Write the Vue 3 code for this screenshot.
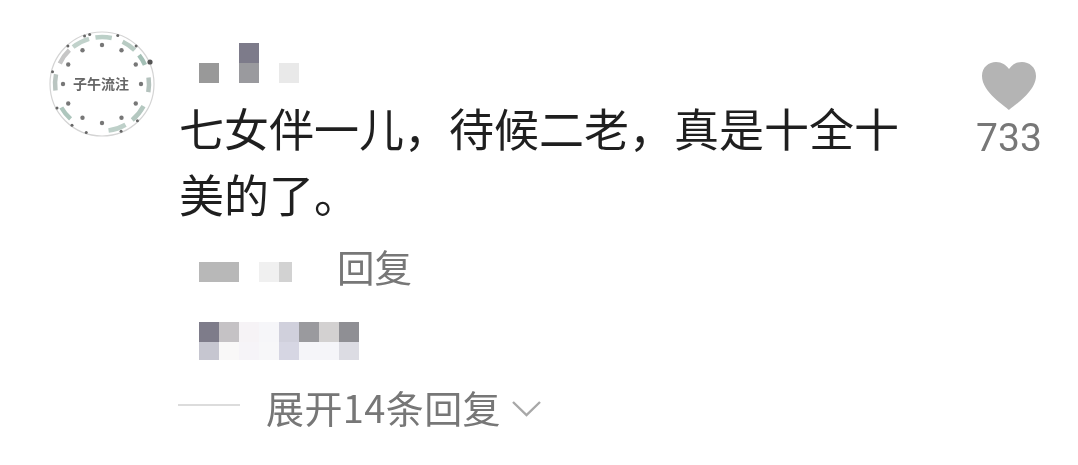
<template>
  <div class="comment">
    <svg class="avatar" width="108" height="108" viewBox="-54 -54 108 108">
      <circle r="52" fill="#fff" stroke="#d4d4d4" stroke-width="1.2" />
      <path
        v-for="(arco, i) in arcos"
        :key="'a' + i"
        :d="arco.d"
        fill="none"
        :stroke="arco.cor"
        stroke-width="4.5"
      />
      <circle v-for="(p, i) in pontosInternos" :key="'i' + i" :cx="p.x" :cy="p.y" r="2.2" fill="#777" />
      <circle v-for="(p, i) in pontosExternos" :key="'e' + i" :cx="p.x" :cy="p.y" r="1.5" fill="#666" />
      <circle cx="48" cy="-22" r="2.6" fill="#555" />
      <text x="-1" y="5" text-anchor="middle" class="avatar-text">子午流注</text>
    </svg>

    <div class="conteudo">
      <div class="nome">
        <span class="bloco medio"></span>
        <span class="bloco alto"></span>
        <span class="bloco claro"></span>
      </div>

      <p class="texto">七女伴一儿，待候二老，真是十全十美的了。</p>

      <div class="meta">
        <span class="data"></span>
        <span class="local"><i></i><i></i></span>
        <span class="responder">回复</span>
      </div>

      <div class="mosaico">
        <span
          v-for="(cor, i) in mosaico"
          :key="i"
          :style="{ background: cor }"
        ></span>
      </div>

      <div class="expandir">
        <span class="linha"></span>
        <span class="expandir-texto">展开14条回复</span>
        <svg class="seta" width="31" height="17" viewBox="0 0 31 17">
          <path d="M2 2 L15.5 15 L29 2" fill="none" stroke="#a8a8a8" stroke-width="2.4" />
        </svg>
      </div>
    </div>

    <div class="curtidas">
      <svg width="56" height="50" viewBox="0 0 56 50">
        <path
          d="M28 49 C24 45 1 31 1 15 C1 6 8 1 15 1 C21 1 25 4 28 8 C31 4 35 1 41 1 C48 1 55 6 55 15 C55 31 32 45 28 49 Z"
          fill="#b4b4b4"
        />
      </svg>
      <span class="numero">733</span>
    </div>
  </div>
</template>

<script setup>
function ponto(graus, raio) {
  const rad = (graus - 90) * Math.PI / 180
  return { x: +(raio * Math.cos(rad)).toFixed(2), y: +(raio * Math.sin(rad)).toFixed(2) }
}

function arco(de, ate, cor) {
  const a = ponto(de, 47)
  const b = ponto(ate, 47)
  return { d: `M${a.x} ${a.y} A47 47 0 0 1 ${b.x} ${b.y}`, cor }
}

const arcos = [
  arco(-8, 12, '#bcd0c8'),
  arco(26, 44, '#b8cbc3'),
  arco(52, 66, '#a4c0b6'),
  arco(82, 100, '#b4c2bd'),
  arco(118, 140, '#b4c8c0'),
  arco(150, 172, '#bed0c9'),
  arco(222, 240, '#aec6bd'),
  arco(262, 282, '#bac5c1'),
  arco(296, 316, '#c6c6c6'),
  arco(322, 344, '#c1d2cb')
]

const pontosInternos = [0, 30, 60, 90, 120, 150, 180, 210, 240, 270, 300, 330].map((g) => ponto(g, 39))
const pontosExternos = [-14, 18, 42, 136, 158, 198, 216, 242, 284, 318, 340].map((g) => ponto(g, 51))

const mosaico = [
  '#7e7c8a', '#c5c2c5', '#f6f3f6', '#f6f6f9', '#d0d0dc', '#9a9a9e', '#d3d1d1', '#8f8f94',
  '#c6c6d0', '#f9f8f8', '#f6f4f8', '#f7f7f9', '#d6d6e3', '#f5f5f9', '#f5f5f9', '#dcdce3'
]
</script>

<style>
html,
body {
  background: #fff;
  overflow: hidden;
}
</style>

<style scoped>
.comment {
  display: flex;
  align-items: flex-start;
  width: 1078px;
  height: 465px;
  box-sizing: border-box;
  padding: 30px 0 0 48px;
  font-family: "Noto Sans CJK SC", "Noto Sans", sans-serif;
  background: #fff;
  filter: blur(0.6px);
  overflow: hidden;
}

.avatar {
  flex: none;
}

.avatar-text {
  font-size: 14px;
  font-weight: 700;
  fill: #666;
  font-family: "Noto Sans CJK SC", sans-serif;
}

.conteudo {
  flex: none;
  width: 788px;
  margin-left: 25px;
  padding-top: 13px;
}

.nome {
  display: flex;
  align-items: flex-end;
  gap: 20px;
  height: 40px;
  padding-left: 18px;
}

.bloco {
  width: 20px;
  height: 20px;
}

.bloco.medio {
  background: #999;
}

.bloco.alto {
  height: 40px;
  background: linear-gradient(#7d7b8a 50%, #9a9a9e 50%);
}

.bloco.claro {
  background: #e9e9e9;
}

.texto {
  width: 730px;
  margin: 12px 0 0 -2px;
  font-size: 45px;
  line-height: 66px;
  color: #1f1f1f;
}

.meta {
  display: flex;
  align-items: center;
  height: 40px;
  margin-top: 21px;
  padding-left: 18px;
}

.data {
  width: 40px;
  height: 20px;
  margin-top: 8px;
  background: #b8b8b8;
}

.local {
  display: flex;
  margin-left: 20px;
  margin-top: 8px;
}

.local i {
  width: 20px;
  height: 20px;
  background: #f0f0f0;
}

.local i + i {
  width: 13px;
  background: #d2d2d2;
}

.responder {
  margin-left: 45px;
  margin-top: -5px;
  font-size: 37.5px;
  color: #777;
}

.mosaico {
  display: grid;
  grid-template-columns: repeat(8, 20px);
  grid-auto-rows: 20px 18px;
  margin-top: 34px;
  margin-left: 18px;
  width: 160px;
}

.expandir {
  display: flex;
  align-items: center;
  height: 46px;
  margin-top: 23px;
  margin-left: -3px;
}

.linha {
  width: 62px;
  height: 2px;
  margin-top: -2px;
  background: #dcdcdc;
}

.expandir-texto {
  margin-left: 26px;
  font-size: 38px;
  letter-spacing: 0.4px;
  color: #777;
}

.seta {
  margin-left: 10px;
  margin-top: 4px;
}

.curtidas {
  flex: none;
  display: flex;
  flex-direction: column;
  align-items: center;
  width: 80px;
  margin-top: 31px;
}

.numero {
  margin-top: 4px;
  font-family: Roboto, sans-serif;
  font-size: 39px;
  line-height: 46px;
  color: #777;
}
</style>
